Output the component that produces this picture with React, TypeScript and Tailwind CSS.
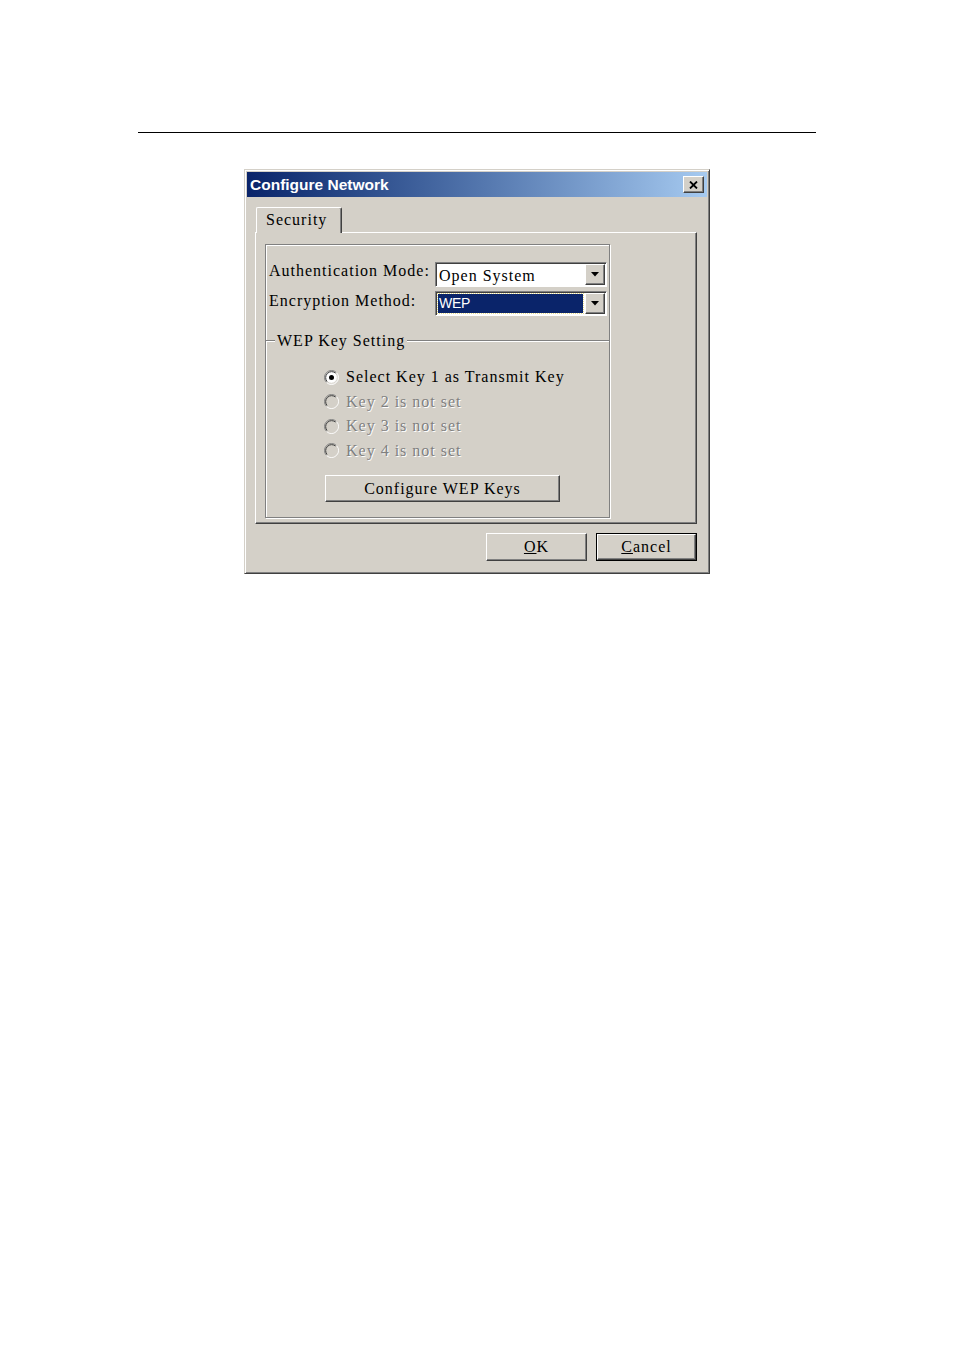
import React from 'react';

const raised =
  'border border-t-white border-l-white border-r-[#404040] border-b-[#404040] shadow-[inset_-1px_-1px_0_#808080]';
const sunken =
  'border border-t-[#808080] border-l-[#808080] border-r-white border-b-white shadow-[inset_1px_1px_0_#404040]';

function DropArrow() {
  return (
    <svg width="8" height="5" viewBox="0 0 8 5">
      <path d="M0 0h8L4 4.5z" fill="#000" />
    </svg>
  );
}

function Combo({ value, focused }: { value: string; focused?: boolean }) {
  return (
    <div className={`w-[172px] h-[25px] bg-white flex items-stretch p-[1px] ${sunken}`}>
      <div className="flex-1 flex items-center pl-[1px] pr-[2px]">
        {focused ? (
          <span className="w-full h-[19px] bg-[#0a246a] text-white flex items-center pl-[1px] outline-1 outline-dotted outline-[#e8dc8c] font-['Liberation_Sans',Arial,sans-serif] text-[14px] tracking-[-0.3px]">
            {value}
          </span>
        ) : (
          <span className="pl-[1px] pt-[3px]">{value}</span>
        )}
      </div>
      <div className={`w-[20px] bg-[#d4d0c8] flex items-center justify-center ${raised}`}>
        <DropArrow />
      </div>
    </div>
  );
}

function Radio({ checked, disabled }: { checked?: boolean; disabled?: boolean }) {
  return (
    <svg width="15" height="15" viewBox="0 0 15 15">
      <circle cx="7.5" cy="7.5" r="6.5" fill={disabled ? '#d4d0c8' : '#fff'} />
      <path d="M2.55 12.45A7 7 0 0 1 12.45 2.55" stroke="#808080" fill="none" />
      <path d="M12.45 2.55A7 7 0 0 1 2.55 12.45" stroke="#fff" fill="none" />
      <path d="M3.26 11.74A6 6 0 0 1 11.74 3.26" stroke="#404040" fill="none" />
      <path d="M11.74 3.26A6 6 0 0 1 3.26 11.74" stroke="#d4d0c8" fill="none" />
      {checked && <circle cx="7.5" cy="7.5" r="2.5" fill="#000" />}
    </svg>
  );
}

function RadioRow({ label, checked, disabled }: { label: string; checked?: boolean; disabled?: boolean }) {
  return (
    <div className="h-[24.5px] flex items-center gap-[7px] pl-[58px]">
      <Radio checked={checked} disabled={disabled} />
      <span className={disabled ? 'text-[#808080] [text-shadow:1px_1px_0_#fff]' : 'text-black'}>{label}</span>
    </div>
  );
}

function EtchedLine({ className = '' }: { className?: string }) {
  return <div className={`h-[2px] border-t border-t-[#808080] border-b border-b-white ${className}`} />;
}

export default function App() {
  return (
    <div className="w-[954px] h-[1350px] bg-white">
      <div className="pt-[132px] pl-[138px]">
        <div className="w-[678px] h-px bg-black" />
      </div>

      <div
        className="ml-[244px] mt-[36px] w-[466px] h-[405px] bg-[#d4d0c8] p-[2px] border border-t-[#d4d0c8] border-l-[#d4d0c8] border-r-[#404040] border-b-[#404040] shadow-[inset_1px_1px_0_#fff,inset_-1px_-1px_0_#808080] font-['Liberation_Serif','Times_New_Roman',serif] text-[16px] tracking-[1px] text-black"
      >
        {/* title bar */}
        <div className="h-[25px] flex items-center justify-between pl-[3px] pr-[3px] bg-gradient-to-r from-[#0a246a] to-[#a6caf0] tracking-normal">
          <span className="font-['Liberation_Sans',Arial,sans-serif] font-bold text-[15.5px] text-white leading-none">
            Configure Network
          </span>
          <div className={`w-[21px] h-[17px] bg-[#d4d0c8] flex items-center justify-center ${raised}`}>
            <svg width="9" height="8" viewBox="0 0 9 8">
              <path d="M1 0.5L8 7.5M8 0.5L1 7.5" stroke="#000" strokeWidth="1.8" />
            </svg>
          </div>
        </div>

        <div className="pl-[8px] pt-[10px]">
          {/* tab */}
          <div className="relative z-10 ml-[1px] w-[86px] h-[26px] bg-[#d4d0c8] border-t border-l border-r border-t-white border-l-white border-r-[#404040] shadow-[inset_-1px_0_0_#808080] rounded-t-[2px] flex items-center pl-[9px] pb-[1px]">
            Security
          </div>

          {/* tab panel */}
          <div className={`-mt-[1px] w-[442px] h-[292px] pl-[9px] pt-[11px] ${raised}`}>
            <div className="w-[345px] h-[274px] border border-[#808080] shadow-[inset_1px_1px_0_#fff,1px_1px_0_#fff]">
              <div className="flex items-start mt-[17px]">
                <span className="w-[169px] pl-[3px] leading-[18px]">Authentication Mode:</span>
                <Combo value="Open System" />
              </div>
              <div className="flex items-start mt-[4px]">
                <span className="w-[169px] pl-[3px] leading-[18px] pt-[1px]">Encryption Method:</span>
                <Combo value="WEP" focused />
              </div>

              <div className="flex items-center h-[16px] mt-[17px]">
                <EtchedLine className="w-[9px]" />
                <span className="px-[2px] leading-[16px]">WEP Key Setting</span>
                <EtchedLine className="flex-1" />
              </div>

              <div className="mt-[16px]">
                <RadioRow label="Select Key 1 as Transmit Key" checked />
                <RadioRow label="Key 2 is not set" disabled />
                <RadioRow label="Key 3 is not set" disabled />
                <RadioRow label="Key 4 is not set" disabled />
              </div>

              <div className="pl-[59px] mt-[12px]">
                <button type="button" className={`w-[235px] h-[27px] bg-[#d4d0c8] flex items-center justify-center ${raised}`}>
                  Configure WEP Keys
                </button>
              </div>
            </div>
          </div>

          {/* dialog buttons */}
          <div className="w-[442px] flex justify-end gap-[9px] mt-[9px]">
            <button type="button" className={`w-[101px] h-[28px] bg-[#d4d0c8] flex items-center justify-center ${raised}`}>
              <span><span className="underline">O</span>K</span>
            </button>
            <button type="button" className="w-[101px] h-[28px] bg-[#d4d0c8] border border-black p-0">
              <div className={`w-full h-full flex items-center justify-center ${raised}`}>
                <span><span className="underline">C</span>ancel</span>
              </div>
            </button>
          </div>
        </div>
      </div>
    </div>
  );
}
